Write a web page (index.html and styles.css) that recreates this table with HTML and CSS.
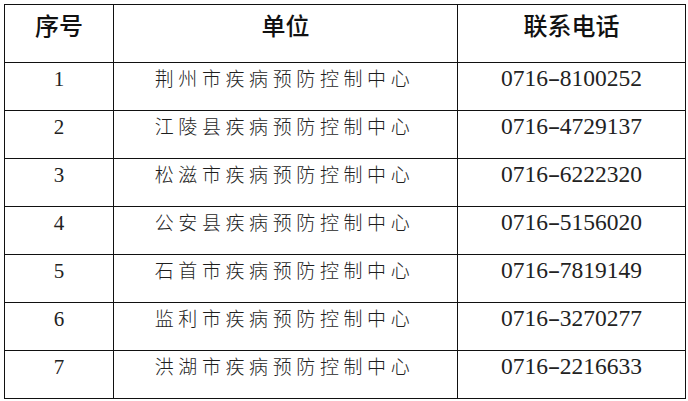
FILE: index.html
```html
<!DOCTYPE html>
<html>
<head>
<meta charset="utf-8">
<title>疾病预防控制中心联系电话</title>
<link rel="stylesheet" href="styles.css">
</head>
<body>
<div class="table">
  <div class="cell head">序号</div>
  <div class="cell head">单位</div>
  <div class="cell head">联系电话</div>

  <div class="cell num">1</div>
  <div class="cell unit">荆州市疾病预防控制中心</div>
  <div class="cell tel">0716<span class="dash">-</span>8100252</div>

  <div class="cell num">2</div>
  <div class="cell unit">江陵县疾病预防控制中心</div>
  <div class="cell tel">0716<span class="dash">-</span>4729137</div>

  <div class="cell num">3</div>
  <div class="cell unit">松滋市疾病预防控制中心</div>
  <div class="cell tel">0716<span class="dash">-</span>6222320</div>

  <div class="cell num">4</div>
  <div class="cell unit">公安县疾病预防控制中心</div>
  <div class="cell tel">0716<span class="dash">-</span>5156020</div>

  <div class="cell num">5</div>
  <div class="cell unit">石首市疾病预防控制中心</div>
  <div class="cell tel">0716<span class="dash">-</span>7819149</div>

  <div class="cell num">6</div>
  <div class="cell unit">监利市疾病预防控制中心</div>
  <div class="cell tel">0716<span class="dash">-</span>3270277</div>

  <div class="cell num">7</div>
  <div class="cell unit">洪湖市疾病预防控制中心</div>
  <div class="cell tel">0716<span class="dash">-</span>2216633</div>
</div>
</body>
</html>
```

FILE: styles.css
```css
html, body {
  margin: 0;
  padding: 0;
  background: #ffffff;
}

body {
  padding: 4px;
}

.table {
  display: grid;
  grid-template-columns: 109px 344px 228px;
  grid-auto-rows: 48px;
  grid-template-rows: 58px;
  width: max-content;
  border-top: 1px solid #111;
  border-left: 1px solid #111;
}

.cell {
  box-sizing: border-box;
  border-right: 1px solid #111;
  border-bottom: 1px solid #111;
  text-align: center;
  color: #1a1a1a;
  line-height: 24px;
  white-space: nowrap;
}

.head {
  font-family: "Noto Sans CJK SC", "Noto Sans", sans-serif;
  font-size: 24px;
  font-weight: 500;
  padding-top: 8px;
  color: #111;
}

.num {
  font-family: "Liberation Serif", "Times New Roman", serif;
  font-size: 21px;
  padding-top: 4px;
  color: #222;
}

.unit {
  font-family: "Noto Sans CJK SC", sans-serif;
  font-size: 19px;
  font-weight: 300;
  letter-spacing: 4.6px;
  padding-top: 3px;
  padding-right: 2px;
  color: #1e1e1e;
}

.tel {
  font-family: "Liberation Serif", "Times New Roman", serif;
  font-size: 23.5px;
  padding-top: 3px;
  color: #222;
}

.dash {
  display: inline-block;
  transform: scaleX(1.6);
  margin: 0 2px;
}
```
